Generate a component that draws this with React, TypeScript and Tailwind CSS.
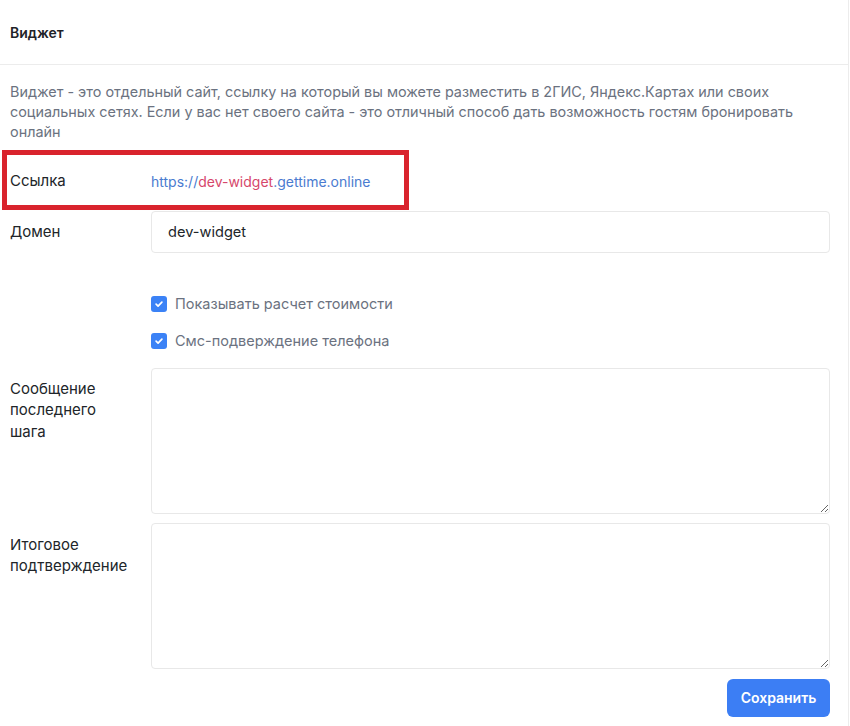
import React from "react";

const Check = () => (
  <span className="flex h-4 w-4 items-center justify-center rounded-[3px] bg-[#3b82f6]">
    <svg width="10" height="10" viewBox="0 0 12 12" fill="none">
      <path d="M2.5 6.2l2.4 2.4 4.6-4.8" stroke="white" strokeWidth="2" strokeLinecap="round" strokeLinejoin="round" />
    </svg>
  </span>
);

const App = () => {
  return (
    <div className="min-h-screen bg-white font-['Inter',sans-serif] text-[15px] text-[#212529]">
      <div className="w-[849px] border-r border-[#ececec] bg-white">
        {/* Header */}
        <div className="flex h-[65px] items-center border-b border-[#ececec] px-[10px]">
          <h1 className="text-[14px] font-semibold text-[#1f2328]">Виджет</h1>
        </div>

        <div className="relative pl-[10px] pr-[18px] pt-[17px]">
          <p className="text-[14.4px] leading-5 text-[#6b7280]">
            Виджет - это отдельный сайт, ссылку на который вы можете разместить в 2ГИС, Яндекс.Картах или своих
            <br />
            социальных сетях. Если у вас нет своего сайта - это отличный способ дать возможность гостям бронировать
            <br />
            онлайн
          </p>

          {/* Link row */}
          <div className="relative mt-[18px] flex h-[42px] items-center">
            <span className="w-[141px] shrink-0">Ссылка</span>
            <a className="text-[14px] text-[#4a7bd0]">
              https://<span className="text-[#d6476b]">dev-widget</span>.gettime.online
            </a>
            <div className="pointer-events-none absolute left-[-8px] top-[-10px] h-[60px] w-[407px] border-[5px] border-[#d9232d]" />
          </div>

          {/* Domain */}
          <div className="mt-[9px] flex items-center">
            <span className="w-[141px] shrink-0">Домен</span>
            <input
              readOnly
              value="dev-widget"
              className="h-[42px] flex-1 rounded-[4px] border border-[#e8e8e8] px-4 text-[14.6px] text-[#212529] outline-none"
            />
          </div>

          {/* Checkboxes */}
          <div className="ml-[141px] mt-[40px] flex flex-col gap-[15px] text-[14.5px] text-[#6b7280]">
            <label className="flex items-center gap-2">
              <Check />
              Показывать расчет стоимости
            </label>
            <label className="flex items-center gap-2">
              <Check />
              Смс-подверждение телефона
            </label>
          </div>

          {/* Textareas */}
          <div className="mt-[16px] flex">
            <span className="w-[141px] shrink-0 pr-5 pt-[10px] leading-[21.5px]">Сообщение последнего шага</span>
            <textarea className="h-[146px] flex-1 rounded-[4px] border border-[#e8e8e8] outline-none" />
          </div>
          <div className="mt-[9px] flex">
            <span className="w-[141px] shrink-0 pr-5 pt-[11px] leading-[21.5px]">Итоговое подтверждение</span>
            <textarea className="h-[146px] flex-1 rounded-[4px] border border-[#e8e8e8] outline-none" />
          </div>

          <div className="mt-[10px] flex justify-end pb-3">
            <button className="h-[38px] w-[103px] rounded-[6px] bg-[#3c7ef4] text-[14px] font-semibold text-white">
              Сохранить
            </button>
          </div>
        </div>
      </div>
    </div>
  );
};

export default App;
